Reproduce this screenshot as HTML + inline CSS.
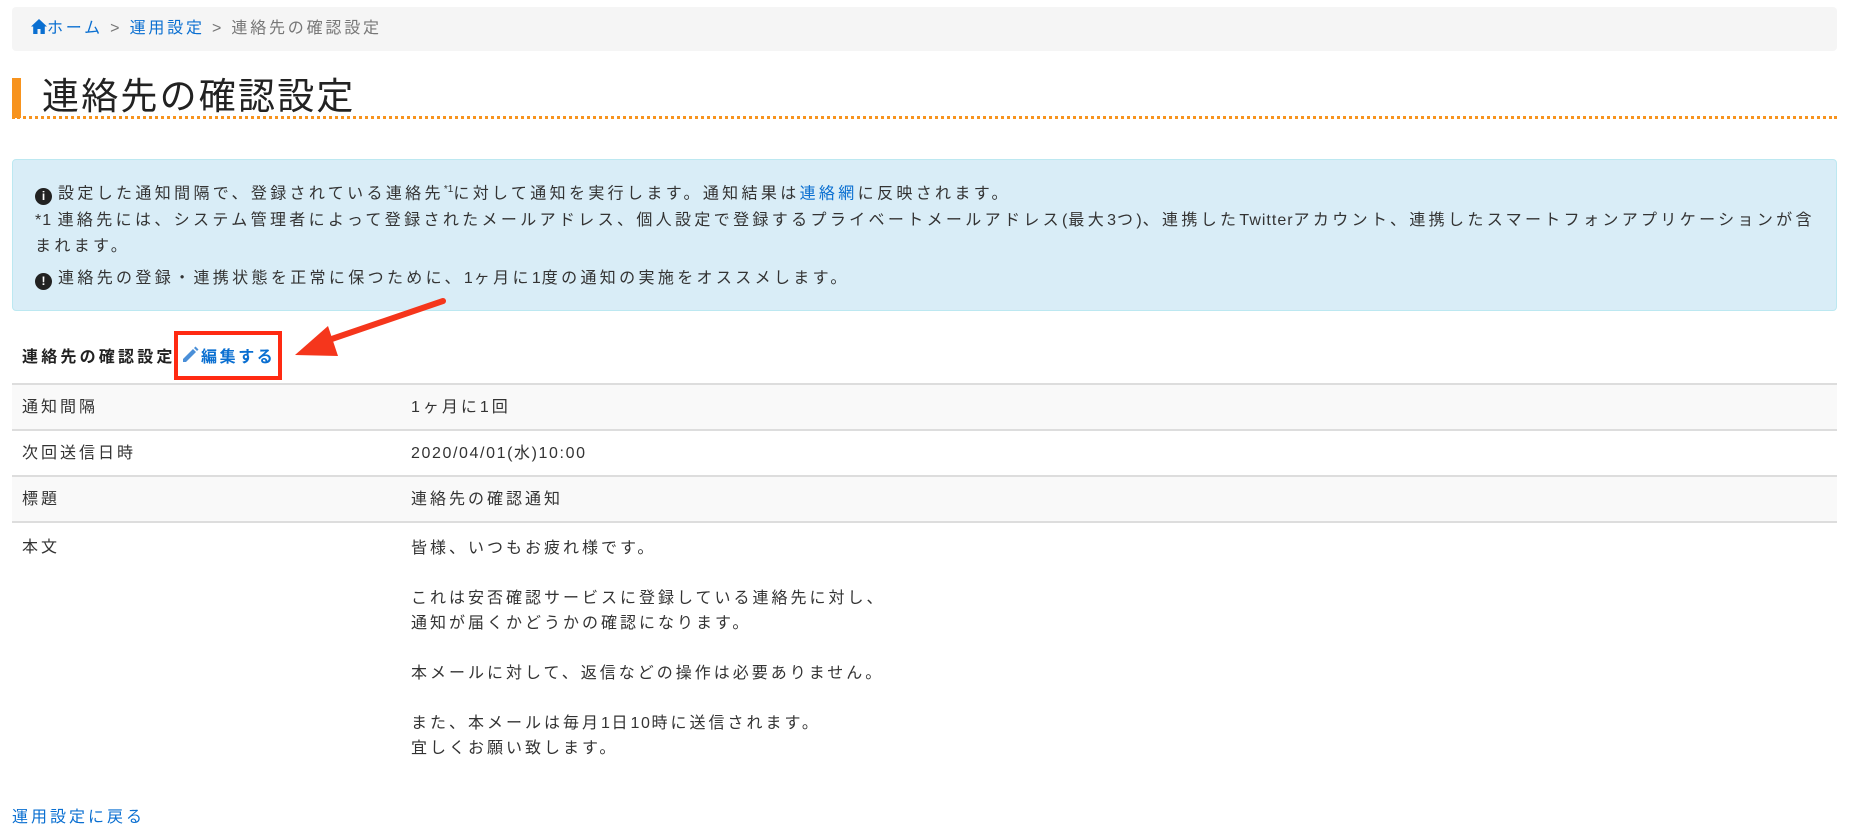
<!DOCTYPE html>
<html><head><meta charset="utf-8"><style>
*{margin:0;padding:0;box-sizing:border-box}
body{width:1852px;height:837px;background:#fff;font-family:"Liberation Sans","Noto Sans CJK JP",sans-serif;color:#333;position:relative;overflow:hidden}
a{color:#0a6fd1;text-decoration:none}
.abs{position:absolute;white-space:nowrap}
.bc{position:absolute;left:12px;top:7px;width:1825px;height:44px;background:#f5f5f5;border-radius:4px;font-size:16px;letter-spacing:2.8px;line-height:44px;padding-left:19px;color:#777}
.bc a{color:#0a6fd1}
.bar{position:absolute;left:12px;top:78px;width:9px;height:40px;background:#f7931e}
.dots{position:absolute;left:12px;top:116px;width:1825px;border-top:3px dotted #f7931e}
.h1{left:42px;top:72px;font-size:37px;letter-spacing:2.2px;line-height:50px;color:#222}
.info{position:absolute;left:12px;top:159px;width:1825px;height:152px;background:#d9edf7;border:1px solid #bce8f1;border-radius:4px;font-size:16px;letter-spacing:3.35px;color:#333}
.info .l{position:absolute;left:22px;white-space:nowrap;line-height:26px}
.lat{letter-spacing:1px}
.ic{display:inline-block;width:17px;height:17px;border-radius:50%;background:#222;color:#fff;font-size:12px;line-height:17px;text-align:center;letter-spacing:0;font-weight:bold;vertical-align:-2px;margin-right:6px}
.sec{left:22px;top:345px;font-size:16px;font-weight:bold;letter-spacing:3.2px;line-height:26px;color:#222}
.redbox{position:absolute;left:174px;top:331px;width:108px;height:49px;border:4px solid #ff2a12}
.edit{left:180px;top:345px;font-size:16px;font-weight:bold;letter-spacing:2.6px;line-height:26px;color:#0a6fd1}
table{position:absolute;left:12px;top:383px;width:1825px;border-collapse:collapse;font-size:16px;letter-spacing:3px}
td{vertical-align:top;padding:11px 10px 0 10px;border-top:2px solid #ddd;height:46px;line-height:24px}
tr.o td{background:#f9f9f9}
td.c1{width:389px}
.num{letter-spacing:1.6px}
.back{left:12px;top:806px;font-size:16px;letter-spacing:3px;line-height:24px}
</style></head><body>
<div class="bc"><a><svg width="16" height="15" viewBox="0 0 16 15" style="vertical-align:-1px"><path d="M8 0L0 7.5h2.2V15h4.3v-5h3v5h4.3V7.5H16z" fill="#0a6fd1"/></svg>ホーム</a> &gt; <a>運用設定</a> &gt; 連絡先の確認設定</div>
<div class="bar"></div>
<div class="abs h1">連絡先の確認設定</div>
<div class="dots"></div>
<div class="info">
<div class="l" style="top:17px"><span class="ic">i</span>設定した通知間隔で、登録されている連絡先<sup style="font-size:10px;letter-spacing:0">*1</sup>に対して通知を実行します。通知結果は<a>連絡網</a>に反映されます。</div>
<div class="l" style="top:48px"><span class="lat">*1 </span>連絡先には、システム管理者によって登録されたメールアドレス、個人設定で登録するプライベートメールアドレス<span class="lat">(</span>最大<span class="lat">3</span>つ<span class="lat">)</span>、連携した<span class="lat">Twitter</span>アカウント、連携したスマートフォンアプリケーションが含</div>
<div class="l" style="top:74px">まれます。</div>
<div class="l" style="top:106px"><span class="ic">!</span>連絡先の登録・連携状態を正常に保つために、<span class="lat">1</span>ヶ月に<span class="lat">1</span>度の通知の実施をオススメします。</div>
</div>
<div class="abs sec">連絡先の確認設定</div>
<div class="abs edit"><svg width="20" height="20" viewBox="0 0 20 20" style="vertical-align:-3px;margin-right:1px"><path d="M3 14L13 4l3 3L6 17H3z" fill="#4a8fd8"/><path d="M14 3l1.5-1.5 3 3L17 6z" fill="#4a8fd8"/></svg>編集する</div>
<div class="redbox"></div>
<svg class="abs" style="left:0;top:0" width="600" height="400"><line x1="443" y1="301" x2="320" y2="343" stroke="#f5361c" stroke-width="6" stroke-linecap="round"/><path d="M295 355L328 326L338 356z" fill="#f5361c"/></svg>
<table>
<tr class="o"><td class="c1">通知間隔</td><td>1ヶ月に1回</td></tr>
<tr><td class="c1">次回送信日時</td><td class="num">2020/04/01(水)10:00</td></tr>
<tr class="o"><td class="c1">標題</td><td>連絡先の確認通知</td></tr>
<tr><td class="c1" style="height:250px;padding-top:13px">本文</td><td style="padding-top:13px;line-height:25px">皆様、いつもお疲れ様です。<br><br>これは安否確認サービスに登録している連絡先に対し、<br>通知が届くかどうかの確認になります。<br><br>本メールに対して、返信などの操作は必要ありません。<br><br>また、本メールは毎月<span class="num">1</span>日<span class="num">10</span>時に送信されます。<br>宜しくお願い致します。</td></tr>
</table>
<a class="abs back">運用設定に戻る</a>
</body></html>
